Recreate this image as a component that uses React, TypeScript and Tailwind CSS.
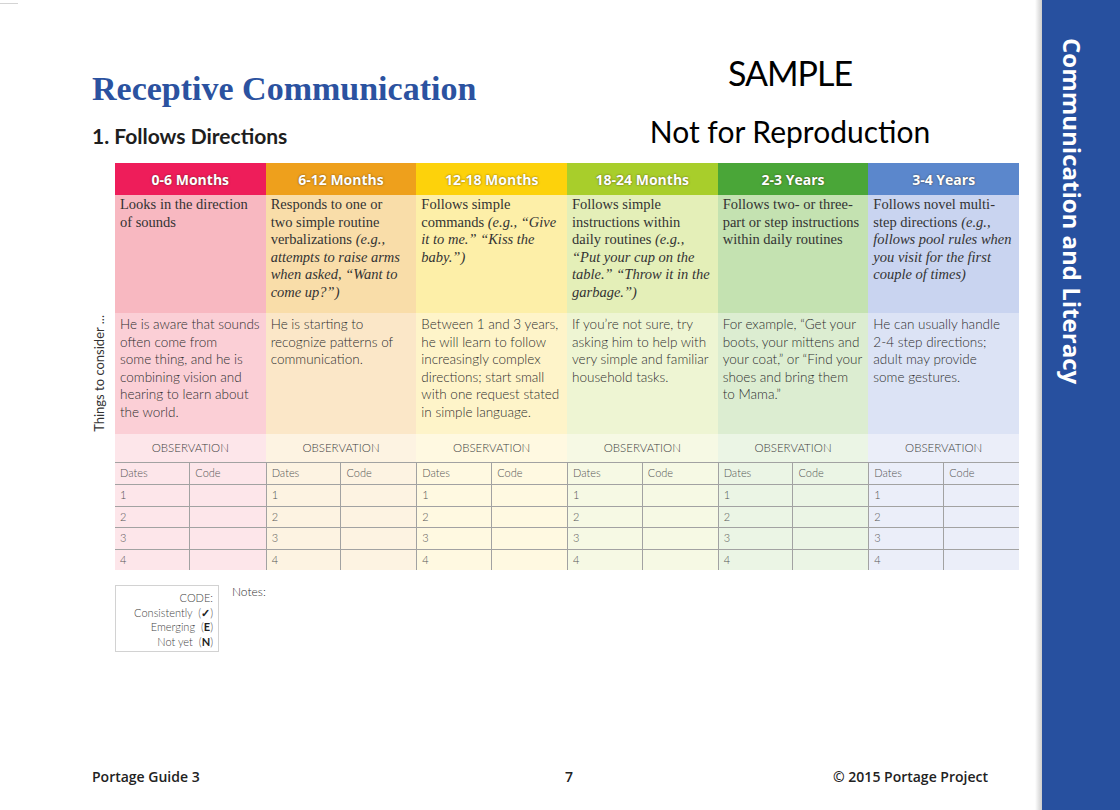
import type { ReactNode } from "react";

interface AgeColumn {
  age: string;
  head: string;
  desc: string;
  cons: string;
  obs: string;
  behavior: ReactNode[];
  consider: string[];
}

const columns: AgeColumn[] = [
  {
    age: "0-6 Months",
    head: "bg-[#ee1d5a]",
    desc: "bg-[#f8b8c1]",
    cons: "bg-[#fbcfd6]",
    obs: "bg-[#fde6ea]",
    behavior: ["Looks in the direction", "of sounds"],
    consider: [
      "He is aware that sounds",
      "often come from",
      "some thing, and he is",
      "combining vision and",
      "hearing to learn about",
      "the world.",
    ],
  },
  {
    age: "6-12 Months",
    head: "bg-[#eea01c]",
    desc: "bg-[#f9dda9]",
    cons: "bg-[#fbe7c8]",
    obs: "bg-[#fdf3e2]",
    behavior: [
      "Responds to one or",
      "two simple routine",
      <>verbalizations <i>(e.g.,</i></>,
      <i>attempts to raise arms</i>,
      <i>when asked, “Want to</i>,
      <i>come up?”)</i>,
    ],
    consider: ["He is starting to", "recognize patterns of", "communication."],
  },
  {
    age: "12-18 Months",
    head: "bg-[#fdd20b]",
    desc: "bg-[#fdefa8]",
    cons: "bg-[#fef4c9]",
    obs: "bg-[#fff9e1]",
    behavior: [
      "Follows simple",
      <>commands <i>(e.g., “Give</i></>,
      <i>it to me.” “Kiss the</i>,
      <i>baby.”)</i>,
    ],
    consider: [
      "Between 1 and 3 years,",
      "he will learn to follow",
      "increasingly complex",
      "directions; start small",
      "with one request stated",
      "in simple language.",
    ],
  },
  {
    age: "18-24 Months",
    head: "bg-[#a8ce2b]",
    desc: "bg-[#e4efb8]",
    cons: "bg-[#eef5d3]",
    obs: "bg-[#f6f9e4]",
    behavior: [
      "Follows simple",
      "instructions within",
      <>daily routines <i>(e.g.,</i></>,
      <i>“Put your cup on the</i>,
      <i>table.” “Throw it in the</i>,
      <i>garbage.”)</i>,
    ],
    consider: [
      "If you’re not sure, try",
      "asking him to help with",
      "very simple and familiar",
      "household tasks.",
    ],
  },
  {
    age: "2-3 Years",
    head: "bg-[#4aa638]",
    desc: "bg-[#c4e2b1]",
    cons: "bg-[#dcedd1]",
    obs: "bg-[#ebf5e5]",
    behavior: ["Follows two- or three-", "part or step instructions", "within daily routines"],
    consider: [
      "For example, “Get your",
      "boots, your mittens and",
      "your coat,” or “Find your",
      "shoes and bring them",
      "to Mama.”",
    ],
  },
  {
    age: "3-4 Years",
    head: "bg-[#5b87cc]",
    desc: "bg-[#c9d4f0]",
    cons: "bg-[#dce3f5]",
    obs: "bg-[#ebeef9]",
    behavior: [
      "Follows novel multi-",
      <>step directions <i>(e.g.,</i></>,
      <i>follows pool rules when</i>,
      <i>you visit for the first</i>,
      <i>couple of times)</i>,
    ],
    consider: [
      "He can usually handle",
      "2-4 step directions;",
      "adult may provide",
      "some gestures.",
    ],
  },
];

const obsRows = [
  { label: "Dates", code: "Code", h: "h-[22px]" },
  { label: "1", code: "", h: "h-[22px]" },
  { label: "2", code: "", h: "h-[21px]" },
  { label: "3", code: "", h: "h-[22px]" },
  { label: "4", code: "", h: "h-[21px]" },
];

function Column({ col, first }: { col: AgeColumn; first: boolean }) {
  return (
    <div className="flex flex-col">
      <div
        className={`${col.head} h-[32px] flex items-center justify-center text-white font-['Open_Sans',sans-serif] font-bold text-[14px] [text-shadow:0_0_2px_rgba(50,30,0,0.7)]`}
      >
        {col.age}
      </div>
      <div
        className={`${col.desc} h-[118px] pl-[5px] pt-[1px] font-['Liberation_Serif',serif] text-[14.5px] leading-[17.5px] text-[#333] whitespace-nowrap`}
      >
        {col.behavior.map((line, i) => (
          <div key={i}>{line}</div>
        ))}
      </div>
      <div
        className={`${col.cons} h-[121px] pl-[5px] pt-[3px] text-[13.5px] leading-[17.5px] font-light text-[#2e2e2e] whitespace-nowrap`}
      >
        {col.consider.map((line, i) => (
          <div key={i}>{line}</div>
        ))}
      </div>
      <div className={`${col.obs} h-[28px] flex items-center justify-center text-[11.5px] font-light text-[#3e3e3e]`}>
        OBSERVATION
      </div>
      <div className={`${col.obs} ${first ? "" : "border-l border-[#a2a2a2]"}`}>
        {obsRows.map((r) => (
          <div key={r.label} className={`${r.h} grid grid-cols-2 border-t border-[#a2a2a2] text-[11px] font-light text-[#555]`}>
            <div className="border-r border-[#a2a2a2] pl-[5px] flex items-center">{r.label}</div>
            <div className="pl-[5px] flex items-center">{r.code}</div>
          </div>
        ))}
      </div>
    </div>
  );
}

export default function App() {
  return (
    <div className="w-[1120px] h-[810px] flex bg-white overflow-hidden font-['Lato',sans-serif]">
      <main className="relative flex-1 flex flex-col pt-[53px] pl-[92px]">
        <div className="absolute left-0 top-[3px] w-[18px] h-px bg-[#d4d4d4]" />

        <header className="flex">
          <div className="w-[468px] pt-[16px]">
            <h1 className="font-['Liberation_Serif',serif] font-bold text-[34px] leading-[40px] text-[#2b52a0]">
              Receptive Communication
            </h1>
            <h2 className="mt-[15px] font-bold text-[21px] leading-[24px] text-[#1e1e1e]">
              1. Follows Directions
            </h2>
          </div>
          <div className="w-[460px] flex flex-col items-center text-black">
            <p className="text-[34px] leading-[40px] tracking-[-1px]">SAMPLE</p>
            <p className="mt-[21px] text-[30px] leading-[35px]">Not for Reproduction</p>
          </div>
        </header>

        <section className="mt-[14px] flex">
          <div className="w-[23px] flex flex-col">
            <div className="h-[150px]" />
            <div className="h-[121px] flex items-center">
              <span className="[writing-mode:vertical-rl] rotate-180 text-[13px] leading-[14px] text-[#333] whitespace-nowrap">
                Things to consider ...
              </span>
            </div>
          </div>
          <div className="w-[904px] grid grid-cols-6">
            {columns.map((c, i) => (
              <Column key={c.age} col={c} first={i === 0} />
            ))}
          </div>
        </section>

        <div className="mt-[15px] ml-[23px] flex gap-[13px]">
          <div className="w-[104px] h-[67px] border border-[#d2d2d2] pt-[5px] pr-[5px] text-right text-[11px] leading-[14.5px] font-light text-[#444]">
            <div>CODE:</div>
            <div>
              Consistently&nbsp; (<span className="font-bold text-[#222]">✓</span>)
            </div>
            <div>
              Emerging&nbsp; (<span className="font-bold text-[#222]">E</span>)
            </div>
            <div>
              Not yet&nbsp; (<span className="font-bold text-[#222]">N</span>)
            </div>
          </div>
          <div className="text-[12px] leading-[14px] font-light text-[#333]">Notes:</div>
        </div>

        <footer className="mt-auto pb-[23px] flex font-['Open_Sans',sans-serif] font-semibold text-[14px] leading-[20px] text-[#222]">
          <div className="w-[473px]">Portage Guide 3</div>
          <div>7</div>
          <div className="flex-1 text-right pr-[47px]">© 2015 Portage Project</div>
        </footer>
      </main>

      <div className="w-[7px] bg-linear-to-r from-white to-[#cdcdcd]" />

      <aside className="w-[78px] bg-[#27509f] pt-[38px] pl-[15px]">
        <div className="[writing-mode:vertical-rl] font-['Open_Sans',sans-serif] font-bold text-[24px] leading-[30px] text-white whitespace-nowrap">
          Communication and Literacy
        </div>
      </aside>
    </div>
  );
}
